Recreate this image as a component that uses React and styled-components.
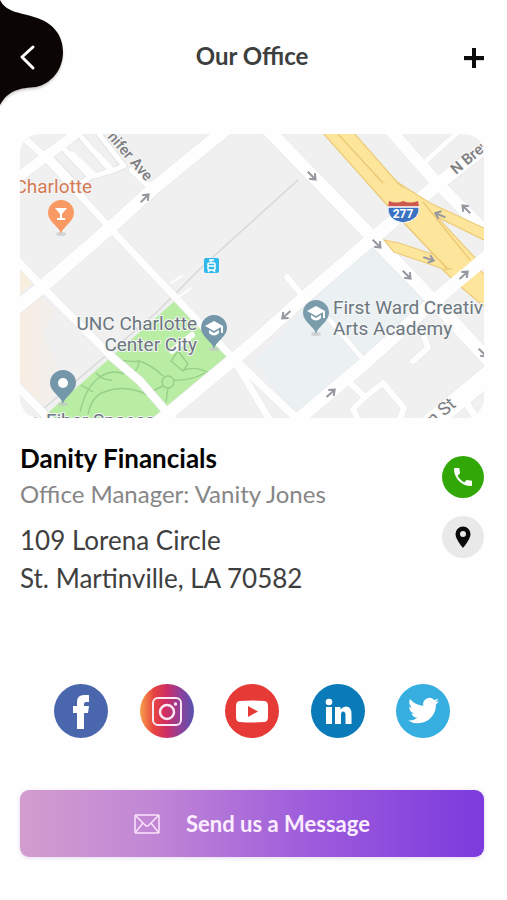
import React from "react";
import styled, { createGlobalStyle } from "styled-components";

const GlobalStyle = createGlobalStyle`
  * {
    box-sizing: border-box;
  }
  body {
    margin: 0;
    background: #fefefe;
    font-family: Lato, "Liberation Sans", sans-serif;
  }
  h1, h2, p {
    margin: 0;
  }
`;

const Page = styled.main`
  padding: 0 23px 43px 20px;
`;

const Header = styled.header`
  display: grid;
  grid-template-columns: 1fr auto 1fr;
  align-items: center;
  height: 112px;
  margin-bottom: 22px;
`;

const Title = styled.h1`
  font-size: 24px;
  line-height: 32px;
  font-weight: 700;
  color: #3d3f3f;
`;

const IconButton = styled.button`
  display: block;
  padding: 0;
  border: 0;
  background: none;
  cursor: pointer;
  justify-self: ${props => props.side || "auto"};

  svg {
    display: block;
  }
`;

const BackButton = styled(IconButton)`
  margin-left: -20px;
`;

const MapCard = styled.section`
  overflow: hidden;
  border-radius: 20px;
  background: #f0f0f0;

  svg {
    display: block;
    width: 100%;
    height: auto;
  }
`;

const Details = styled.section`
  display: flex;
  justify-content: space-between;
  padding-top: 22px;
`;

const Name = styled.h2`
  font-size: 26px;
  line-height: 36px;
  font-weight: 700;
  color: #050505;
`;

const Role = styled.p`
  font-size: 24px;
  line-height: 36px;
  color: #868686;
`;

const Address = styled.address`
  margin-top: 9px;
  font-size: 26px;
  line-height: 38px;
  font-style: normal;
  color: #3f3f3f;
`;

const Actions = styled.div`
  display: flex;
  flex-direction: column;
  gap: 18px;
  padding-top: 16px;
`;

const RoundLink = styled.a`
  display: flex;
  align-items: center;
  justify-content: center;
  width: ${props => props.size}px;
  height: ${props => props.size}px;
  border-radius: 50%;
  background: ${props => props.fill};
`;

const Social = styled.nav`
  display: flex;
  justify-content: space-between;
  padding: 0 34px;
  margin-top: 87px;
`;

const MessageButton = styled.button`
  display: flex;
  align-items: center;
  justify-content: center;
  gap: 26px;
  width: 100%;
  height: 67px;
  margin-top: 52px;
  border: 0;
  border-radius: 9px;
  background: linear-gradient(90deg, #d29dce, #c187d5 28%, #9b59dc 65%, #7c3bdd);
  box-shadow: 0 1px 4px #e6d8f2;
  color: #fdeeff;
  font-family: inherit;
  font-size: 22px;
  line-height: 32px;
  font-weight: 700;
  cursor: pointer;
`;

const roads = [
  { d: "M-5 11 L0 0 L25 23 L90 94 L136 143 L157 165 L213 224 L252 290", w: 7 },
  { d: "M213 224 L275 283", w: 8 },
  { d: "M-5 46 L25 23 L62 -5", w: 10 },
  { d: "M-5 124 L22 153 L93 224 L120 247 L152 284", w: 8 },
  { d: "M-5 250 L30 286", w: 8 },
  { d: "M112 36 L133 56", w: 6 },
  { d: "M405 28 L438 -2", w: 5 },
  { d: "M267 143 L282 161", w: 6 },
  { d: "M308 184 L342 224", w: 5 },
  { d: "M402 197 L408 214 L393 227", w: 6 },
  { d: "M330 249 L345 263 L363 249 L384 274 L378 290", w: 6 },
  { d: "M345 263 L333 275 L340 290", w: 6 },
  { d: "M442 262 L460 290", w: 7 },
  { d: "M-6 176 L22 153 L90 94 L134 54 L210 -8", w: 13 },
  { d: "M136 290 L213 226 L240 203 L280 167 L353 104 L417 51 L475 5", w: 13 },
  { d: "M250 -2 L353 104 L413 166 L470 228", w: 13 },
  { d: "M372 -2 L417 49 L470 102", w: 12 },
  { d: "M280 284 L343 231 L413 168 L475 116", w: 13 },
  { d: "M402 296 L475 236", w: 19 },
];

const parking = [
  "M31 24 L57 52 L70 43 L43 14",
  "M43 14 L73 42 L91 37 L62 4",
  "M76 -4 L104 32 L91 37",
  "M33 30 L57 52",
];

const arrows = [
  [125, 64, -45],
  [292, 42, 45],
  [357, 110, 45],
  [387, 141, 45],
  [409, 125, 18],
  [420, 81, 203],
  [446, 75, 225],
  [444, 141, -42],
  [266, 181, 138],
  [311, 259, -42],
  [463, 219, 45],
];

const Pin = ({ x, y, color, children }) => (
  <g transform={`translate(${x} ${y})`}>
    <ellipse cx="0" cy="21" rx="5" ry="2" fill="#c4c8c9" opacity="0.7" />
    <path d="M0 21 C-1 14 -13 9 -13 0 A13 13 0 0 1 13 0 C13 9 1 14 0 21 Z" fill={color} />
    {children}
  </g>
);

const Cap = () => (
  <g fill="#fff">
    <path d="M-9 -2 L0 -7 L9 -2 L0 3 Z" />
    <path d="M-5 2 L0 5 L5 2 V5 Q0 10 -5 5 Z" />
    <path d="M7 -2 H9 V5 H7 Z" />
  </g>
);

const OfficeMap = () => (
  <svg viewBox="0 0 464 284" role="img" aria-label="Office map" fontFamily="Roboto, sans-serif">
    <defs>
      <linearGradient id="cream" x1="0" x2="1">
        <stop offset="0" stopColor="#f8eee2" />
        <stop offset="1" stopColor="#f0efee" />
      </linearGradient>
    </defs>
    <rect width="464" height="284" fill="#f0f0f0" />
    <path d="M0 176 L18 162 L38 178 L22 200 L42 236 L36 262 L22 272 L0 250 Z" fill="url(#cream)" />
    <path d="M0 134 L15 147 L0 160 Z" fill="#f8f0df" />
    <path d="M235 228 L317 138 L355 104 L413 164 L343 226 L277 284 Z" fill="#ebf0f3" />

    {/* park */}
    <path d="M22 284 L157 165 L210 223 L140 284 Z" fill="#b9eda4" />
    <g fill="none" stroke="#96cf89" strokeWidth="1.4">
      <path d="M93 224 Q106 229 119 227 Q132 231 143 242" />
      <path d="M119 227 Q119 234 112 241" />
      <circle cx="148" cy="248" r="6" />
      <path d="M148 254 L146 268 M143 252 L130 258 M154 246 Q170 247 185 239" />
      <path d="M158 217 L151 227 L163 237 L168 230 L158 217" />
      <path d="M164 236 Q178 231 192 241" />
      <path d="M60 278 Q66 252 80 243 Q92 235 104 240 M68 280 Q72 262 84 258 Q110 248 138 267" />
      <path d="M76 239 Q84 247 92 246 M61 251 L73 258" />
    </g>
    <path d="M278 46 L183 132 L137 178 L22 276" fill="none" stroke="#d8d8d8" strokeWidth="1.5" />

    <g fill="none" strokeLinejoin="round" strokeLinecap="round">
      <g stroke="#e4e5e6">
        {parking.map(d => <path key={d} d={d} strokeWidth="7" />)}
        {roads.map(road => <path key={road.d} d={road.d} strokeWidth={road.w + 1} />)}
      </g>
      <g stroke="#fefefe">
        {parking.map(d => <path key={d} d={d} strokeWidth="5" />)}
        <path d="M52 19 L76 42" strokeWidth="4" />
        <path d="M62 4 L91 34" strokeWidth="4" />
        {roads.map(road => <path key={road.d} d={road.d} strokeWidth={road.w} />)}
        <path d="M152 217 L172 201" strokeWidth="6" />
        <path d="M151 149 L162 142 M157 164 L171 154" strokeWidth="2" />
      </g>
    </g>

    {/* highway */}
    <g fill="#fde59b" stroke="#eccb78" strokeWidth="1.2">
      <path d="M302 -2 L367 71 L418 124 L427 134 L446 138 L458 127 L403 68 L377 48 L333 -2 Z" />
      <path d="M377 48 L410 69 L468 96 V108 L407 78 Z" />
      <path d="M364 106 L379 109 L415 121 L430 139 L418 133 L374 118 Z" />
      <path d="M423 136 L440 152 L468 176 V144 L455 132 Z" />
    </g>
    <path d="M367 71 L418 124 L440 140 L455 126 L403 68 L380 52 Z" fill="#fde59b" />
    <path d="M318 0 L363 49 M367 71 L418 125 M403 68 L450 126" fill="none" stroke="#eac670" strokeWidth="1.2" />
    <path d="M413 168 L475 116" stroke="#fefefe" strokeWidth="13" />

    <g fill="none" stroke="#9698a0" strokeWidth="2">
      {arrows.map(([x, y, angle]) => (
        <path
          key={`${x}-${y}`}
          transform={`translate(${x} ${y}) rotate(${angle})`}
          d="M-6 0 H5 M0 -4 L5 0 L0 4"
        />
      ))}
    </g>

    {/* tram stop */}
    <rect x="184" y="124" width="15" height="15" rx="2" fill="#2fb9ea" />
    <g fill="none" stroke="#fff" strokeWidth="1.5">
      <path d="M189 126 H194 M191 126 V128" />
      <rect x="188" y="129" width="7" height="7" rx="1" />
      <path d="M188 132 H195 M188 138 L190 136 M195 138 L193 136" />
    </g>

    {/* interstate shield */}
    <path d="M368 72 H399 Q401 86 383 89 Q366 86 368 72 Z" fill="#3c73c1" stroke="#fff" />
    <path d="M369 67 Q377 70 383 67 Q390 70 398 67 L399 73 H368 Z" fill="#cd584f" />
    <path d="M368 73 H399" stroke="#fff" strokeWidth="1.5" />
    <text x="383" y="84" fontSize="12" fontWeight="700" fill="#fff" textAnchor="middle">277</text>

    <Pin x={41} y={79} color="#f99963">
      <path d="M-6 -5 H6 L1 1 V5 H4 V7 H-4 V5 H-1 V1 Z" fill="#fff" />
    </Pin>
    <Pin x={43} y={249} color="#7597aa">
      <circle r="5" fill="#fff" />
    </Pin>
    <Pin x={194} y={194} color="#7597aa"><Cap /></Pin>
    <Pin x={296} y={179} color="#7b9dab"><Cap /></Pin>

    <g fontSize="19" fill="#6b7780" stroke="#f6f6f6" strokeWidth="2" paintOrder="stroke">
      <text x="72" y="59" fill="#d47a55" textAnchor="end">Charlotte</text>
      <text x="177" y="196" textAnchor="end">UNC Charlotte</text>
      <text x="177" y="217" textAnchor="end">Center City</text>
      <text x="313" y="180">First Ward Creativ</text>
      <text x="313" y="201">Arts Academy</text>
      <text x="4" y="293">ic</text>
      <text x="26" y="293">Fiber Spaces</text>
    </g>
    <g fontSize="15" fontWeight="500" fill="#7c7d80" stroke="#f6f6f6" strokeWidth="2" paintOrder="stroke">
      <text transform="translate(87 3) rotate(49)">nifer Ave</text>
      <text transform="translate(436 41) rotate(-40)">N Brev</text>
      <text transform="translate(413 292) rotate(-40)" fontSize="18" fontWeight="400">n St</text>
    </g>
  </svg>
);

const FacebookIcon = () => (
  <svg width="54" height="54" viewBox="0 0 54 54">
    <path d="M23 45 V29 H19 V22 H23 V18 Q23 11 30 11 H35 V18 H32 Q30 18 30 20 V22 H35 L34 29 H30 V45 Z" fill="#fff" />
  </svg>
);

const InstagramIcon = () => (
  <svg width="54" height="54" viewBox="0 0 54 54" fill="none" stroke="#fbe8f3" strokeWidth="2">
    <rect x="13" y="14" width="28" height="27" rx="5" />
    <circle cx="27" cy="28" r="7" strokeWidth="2.5" />
    <circle cx="35.5" cy="20" r="1.7" fill="#fbe8f3" stroke="none" />
  </svg>
);

const YoutubeIcon = () => (
  <svg width="54" height="54" viewBox="0 0 54 54">
    <path d="M15 17 Q27 16 39 17 Q43 17 43 22 V33 Q43 38 39 38 Q27 39 15 38 Q11 38 11 33 V22 Q11 17 15 17 Z" fill="#fff" />
    <path d="M23 22 L33 27.5 L23 33 Z" fill="#e53a35" />
  </svg>
);

const LinkedinIcon = () => (
  <svg width="54" height="54" viewBox="0 0 54 54" fill="#fff">
    <circle cx="18" cy="18" r="3.3" />
    <path d="M15 23 H21 V40 H15 Z" />
    <path d="M24 23 H29.5 V25.5 Q32 22.5 35 22.5 Q40.5 22.5 40.5 30 V40 H34.5 V31 Q34.5 27.5 32 27.5 Q30 27.5 30 31 V40 H24 Z" />
  </svg>
);

const TwitterIcon = () => (
  <svg width="54" height="54" viewBox="0 0 54 54">
    <g transform="translate(12 11) scale(1.3)">
      <path
        fill="#fff"
        d="M23.95 4.57a10 10 0 0 1-2.82.78 4.96 4.96 0 0 0 2.16-2.73c-.95.55-2 .96-3.13 1.18a4.92 4.92 0 0 0-8.38 4.48C7.69 8.09 4.07 6.13 1.64 3.16a4.82 4.82 0 0 0-.67 2.48c0 1.71.87 3.21 2.19 4.1a4.9 4.9 0 0 1-2.23-.62v.06a4.92 4.92 0 0 0 3.95 4.83 5 5 0 0 1-2.21.08 4.94 4.94 0 0 0 4.6 3.42A9.87 9.87 0 0 1 0 19.54a13.99 13.99 0 0 0 7.55 2.21c9.05 0 14-7.5 14-13.98 0-.21 0-.42-.02-.63a9.94 9.94 0 0 0 2.42-2.57z"
      />
    </g>
  </svg>
);

const socials = [
  { name: "Facebook", fill: "#4a67ad", Icon: FacebookIcon },
  { name: "Instagram", fill: "linear-gradient(90deg, #f7a14c, #e8453f 25%, #cf2d62 48%, #8e409a 75%, #5553b0)", Icon: InstagramIcon },
  { name: "YouTube", fill: "#e53a35", Icon: YoutubeIcon },
  { name: "LinkedIn", fill: "#0b7ab8", Icon: LinkedinIcon },
  { name: "Twitter", fill: "#37aee0", Icon: TwitterIcon },
];

export default function App() {
  return (
    <Page>
      <GlobalStyle />
      <Header>
        <BackButton side="start" aria-label="Back">
          <svg width="70" height="112" viewBox="0 0 70 112">
            <path
              d="M0 0 C6 12 18 12 34 17 C52 22 63 34 63 52 C63 71 50 84 36 87 C20 88 8 90 0 105 Z"
              fill="#0b0504"
              filter="drop-shadow(0 2px 1px #cfcccb)"
            />
            <path d="M33 47 L22 57 L33 68" fill="none" stroke="#fff" strokeWidth="3" strokeLinecap="round" strokeLinejoin="round" />
          </svg>
        </BackButton>
        <Title>Our Office</Title>
        <IconButton side="end" aria-label="Add">
          <svg width="20" height="24" viewBox="0 0 20 24">
            <path d="M0 15 H20 M10 6 V25" stroke="#d5d5d5" strokeWidth="4" />
            <path d="M0 14 H20 M10 4 V24" stroke="#0c0c0c" strokeWidth="4" />
          </svg>
        </IconButton>
      </Header>

      <MapCard>
        <OfficeMap />
      </MapCard>

      <Details>
        <div>
          <Name>Danity Financials</Name>
          <Role>Office Manager: Vanity Jones</Role>
          <Address>
            109 Lorena Circle
            <br />
            St. Martinville, LA 70582
          </Address>
        </div>
        <Actions>
          <RoundLink href="#call" size={42} fill="#31a807" aria-label="Call">
            <svg width="24" height="24" viewBox="0 0 24 24">
              <path
                fill="#fff"
                d="M6.62 10.79c1.44 2.83 3.76 5.14 6.59 6.59l2.2-2.2c.27-.27.67-.36 1.02-.24 1.12.37 2.33.57 3.57.57.55 0 1 .45 1 1V20c0 .55-.45 1-1 1-9.39 0-17-7.61-17-17 0-.55.45-1 1-1h3.5c.55 0 1 .45 1 1 0 1.25.2 2.45.57 3.57.11.35.03.74-.25 1.02l-2.2 2.2z"
              />
            </svg>
          </RoundLink>
          <RoundLink href="#directions" size={42} fill="#e9e9e9" aria-label="Directions">
            <svg width="24" height="24" viewBox="0 0 24 24">
              <path fillRule="evenodd" fill="#0a0a0a" d="M12 1.5A7.5 7.5 0 0 0 4.5 9C4.5 14.5 12 23 12 23S19.5 14.5 19.5 9A7.5 7.5 0 0 0 12 1.5Z M12 6A3 3 0 1 1 12 12A3 3 0 0 1 12 6Z" />
            </svg>
          </RoundLink>
        </Actions>
      </Details>

      <Social aria-label="Social media">
        {socials.map(({ name, fill, Icon }) => (
          <RoundLink key={name} href={`#${name.toLowerCase()}`} size={54} fill={fill} aria-label={name}>
            <Icon />
          </RoundLink>
        ))}
      </Social>

      <MessageButton>
        <svg width="26" height="20" viewBox="0 0 26 20" fill="none" stroke="#fbe3fb" strokeWidth="1.5">
          <rect x="1" y="1" width="24" height="18" rx="1" />
          <path d="M1 1 L11 11 Q13 13 15 11 L25 1 M1 19 L9 9 M25 19 L17 9" />
        </svg>
        <span>Send us a Message</span>
      </MessageButton>
    </Page>
  );
}
